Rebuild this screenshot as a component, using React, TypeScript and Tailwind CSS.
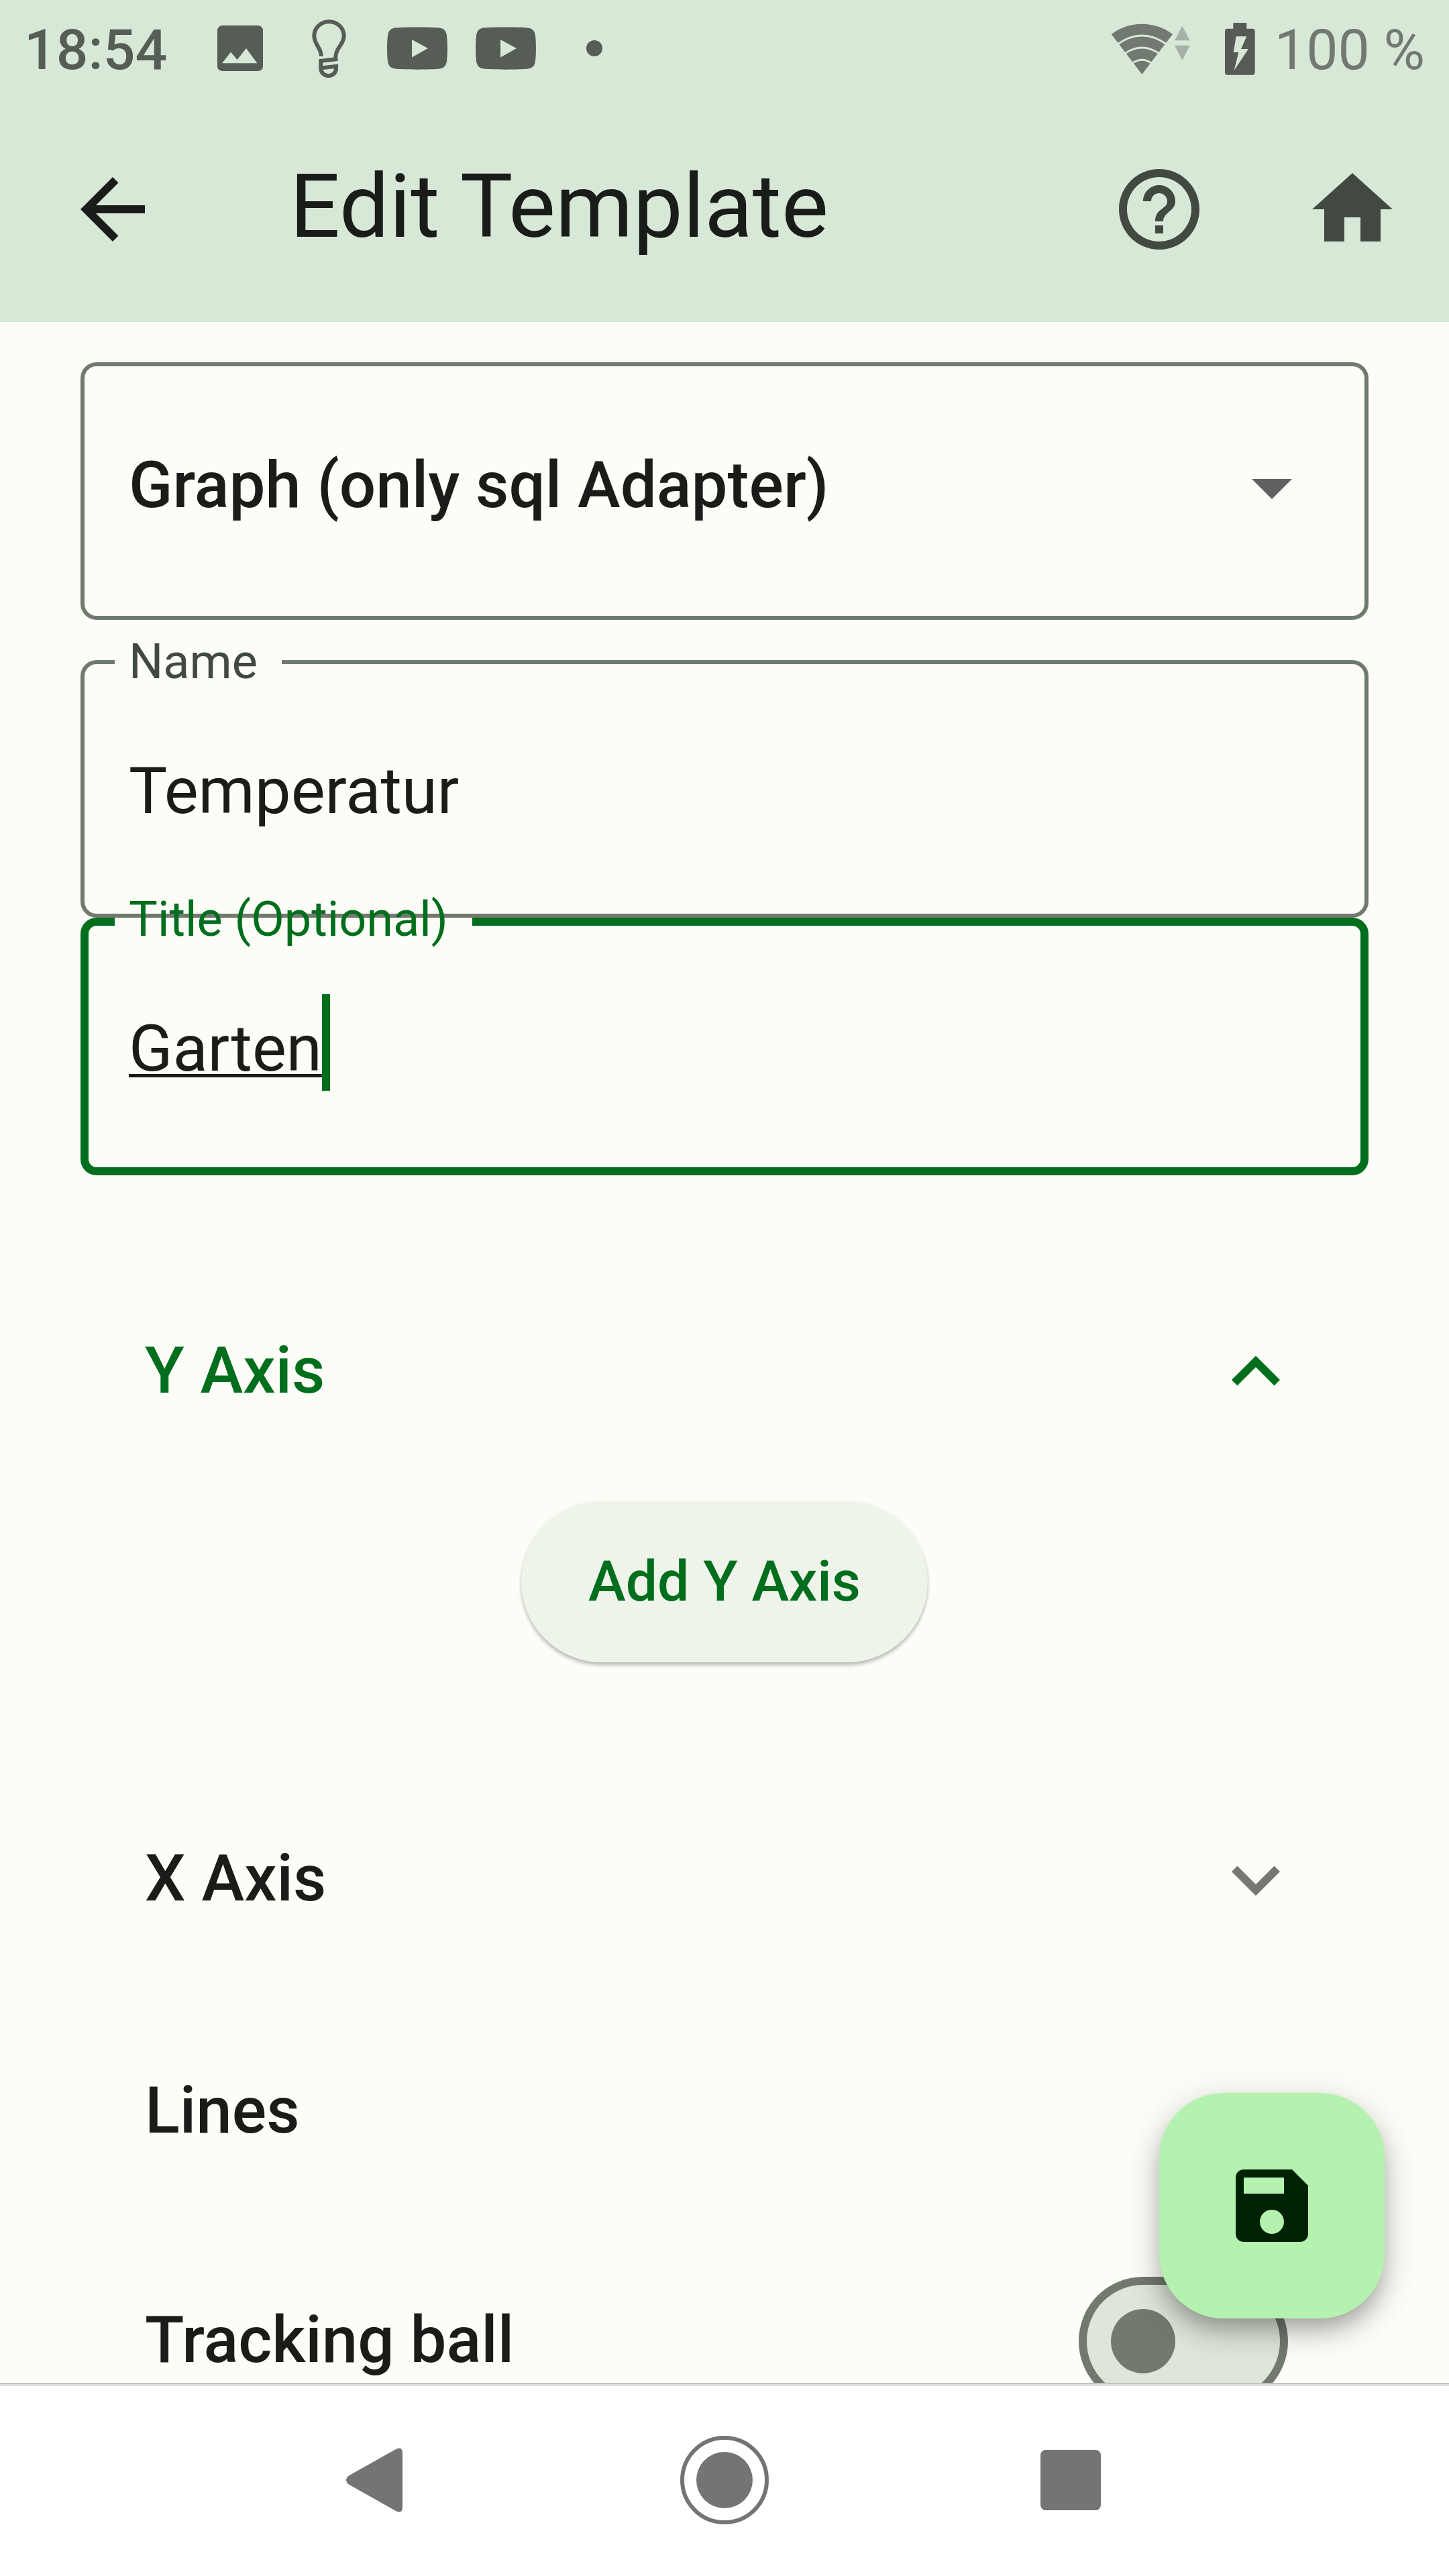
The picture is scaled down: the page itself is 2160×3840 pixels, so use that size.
import { useState, type ReactNode } from "react";

const cell = "flex w-[132px] shrink-0 items-center justify-center";

function PlayBadge() {
  return (
    <svg viewBox="0 0 90 64" className="h-[64px] w-[90px]" aria-hidden="true">
      <path
        fillRule="evenodd"
        fill="#565d55"
        d="M12 1.5C22 0 68 0 78 1.5C85 2.5 88 6 89 13C90.300 24 90.300 40 89 51C88 58 85 61.500 78 62.500C68 64 22 64 12 62.500C5 61.500 2 58 1 51C-.3 40 -.3 24 1 13C2 6 5 2.500 12 1.500ZM37 19V45.500L61 32Z"
      />
    </svg>
  );
}

function StatusBar() {
  return (
    <div className="flex h-36 items-center justify-between px-9 text-[84px] leading-[98px]">
      <div className="flex items-center text-[#565d55]">
        <time className="w-[256px] pt-[6px] font-medium">18:54</time>
        <span className={cell}>
          <svg viewBox="0 0 204 204" className="h-[68px] w-[68px]" aria-hidden="true">
            <path
              fillRule="evenodd"
              fill="#565d55"
              d="M22 0H182A22 22 0 0 1 204 22V182A22 22 0 0 1 182 204H22A22 22 0 0 1 0 182V22A22 22 0 0 1 22 0ZM21 169H178L129 102L89 153L60 119Z"
            />
          </svg>
        </span>
        <span className={cell}>
          <svg viewBox="490 50 160 270" className="h-[90px] w-[53px]" fill="none" stroke="#565d55" strokeWidth="18" aria-hidden="true">
            <path d="M535 221C535 183 503 168 503 129A67 64 0 0 1 637 129C637 168 600 183 600 221V234L533 242V274C533 320 602 320 602 274V266L540 273" />
          </svg>
        </span>
        <span className={cell}>
          <PlayBadge />
        </span>
        <span className={cell}>
          <PlayBadge />
        </span>
        <span className={cell}>
          <span className="size-6 rounded-full bg-[#565d55]" />
        </span>
      </div>
      <div className="flex items-center text-[#727971]">
        <svg viewBox="50 60 360 240" className="h-[80px] w-[120px]" aria-label="Wi-Fi">
          <path fill="#727971" d="M52 117C132 56 245 56 326 117L189 296Z" />
          <g fill="none" stroke="#d7e8d6" strokeWidth="9">
            <path d="M78 163Q189 83 300 163" />
            <path d="M110 205Q189 149 268 205" />
            <path d="M144 248Q189 216 234 248" />
          </g>
          <path fill="#a5b1a4" d="M369 80L403 145H335ZM369 233L335 167H403Z" />
        </svg>
        <svg viewBox="557 60 135 240" className="ml-[50px] h-[80px] w-[45px]" aria-label="Charging">
          <path
            fillRule="evenodd"
            fill="#565b55"
            d="M594 66H654V92H680A11 11 0 0 1 691 103V288A11 11 0 0 1 680 299H568A11 11 0 0 1 557 288V103A11 11 0 0 1 568 92H594ZM607 127L595 198H618L598 279L662 183H629L654 127Z"
          />
        </svg>
        <span className="ml-[29px] pt-[6px]">100 %</span>
      </div>
    </div>
  );
}

function Icon({ d, className = "" }: { d: string; className?: string }) {
  return (
    <svg viewBox="0 0 24 24" fill="currentColor" className={`size-36 ${className}`} aria-hidden="true">
      <path d={d} />
    </svg>
  );
}

const icons = {
  back: "M20 11H7.83l5.59-5.59L12 4l-8 8 8 8 1.41-1.41L7.83 13H20v-2z",
  help: "M11 18h2v-2h-2v2zm1-16C6.480 2 2 6.480 2 12s4.480 10 10 10 10-4.480 10-10S17.520 2 12 2zm0 18c-4.410 0-8-3.590-8-8s3.590-8 8-8 8 3.590 8 8-3.590 8-8 8zm0-14c-2.210 0-4 1.790-4 4h2c0-1.100.9-2 2-2s2 .9 2 2c0 2-3 1.750-3 5h2c0-2.250 3-2.500 3-5 0-2.210-1.790-4-4-4z",
  home: "M10 20v-6h4v6h5v-8h3L12 3 2 12h3v8z",
  dropDown: "M7 10l5 5 5-5z",
  more: "M16.590 8.590L12 13.170 7.410 8.590 6 10l6 6 6-6z",
  save: "M17 3H5c-1.110 0-2 .9-2 2v14c0 1.100.89 2 2 2h14c1.100 0 2-.9 2-2V7l-4-4zm-5 16c-1.660 0-3-1.340-3-3s1.340-3 3-3 3 1.340 3 3-1.340 3-3 3zm3-10H5V5h10v4z",
};

function IconButton({ label, d }: { label: string; d: string }) {
  return (
    <button type="button" aria-label={label} className="flex size-72 items-center justify-center text-[#424940]">
      <Icon d={d} />
    </button>
  );
}

function AppBar() {
  return (
    <div className="flex h-[336px] items-center">
      <button type="button" aria-label="Back" className="flex h-full w-[336px] items-center justify-center text-[#1a1c19]">
        <Icon d={icons.back} />
      </button>
      <h1 className="ml-24 flex-1 pb-2 text-[132px] leading-[156px] text-[#1a1c19]">Edit Template</h1>
      <IconButton label="Help" d={icons.help} />
      <IconButton label="Home" d={icons.home} />
    </div>
  );
}

function Tile({ title, open, onToggle, children }: { title: string; open: boolean; onToggle: () => void; children?: ReactNode }) {
  return (
    <section>
      <button
        type="button"
        aria-expanded={open}
        onClick={onToggle}
        className={`flex h-[336px] w-full items-center justify-between px-24 text-[96px] leading-[144px] font-medium ${open ? "text-[#006e1c]" : "text-[#1a1c19]"}`}
      >
        <span className="pb-1">{title}</span>
        <Icon d={icons.more} className={open ? "rotate-180" : "text-[#757871]"} />
      </button>
      {open && children}
    </section>
  );
}

export default function App() {
  const [name, setName] = useState("Temperatur");
  const [title, setTitle] = useState("Garten");
  const [yOpen, setYOpen] = useState(true);
  const [xOpen, setXOpen] = useState(false);
  const [tracking, setTracking] = useState(false);

  return (
    <div className="flex h-screen flex-col bg-[#fcfdf6] font-[Roboto,sans-serif] text-[#1a1c19]">
      <header className="shrink-0 bg-[#d7e8d6]">
        <StatusBar />
        <AppBar />
      </header>

      <div className="relative min-h-0 flex-1">
        <main className="h-full overflow-hidden px-[120px] pt-[60px]">
          <div className="grid items-center">
            <select
              aria-label="Template type"
              className="col-start-1 row-start-1 h-96 w-full appearance-none rounded-3xl border-6 border-[#72796f] bg-transparent px-[66px] pb-[18px] text-[96px] font-medium"
            >
              <option>Graph (only sql Adapter)</option>
            </select>
            <Icon d={icons.dropDown} className="pointer-events-none col-start-1 row-start-1 mr-[72px] mb-3 justify-self-end text-[#616161]" />
          </div>

          <fieldset className="mt-[60px] min-w-0 rounded-3xl border-6 border-[#72796f]">
            <legend className="ml-[45px] h-[6px] pr-9 pl-[21px] text-[72px] leading-[6px] text-[#424940]">
              <label htmlFor="name">Name</label>
            </legend>
            <input
              id="name"
              value={name}
              onChange={(e) => setName(e.target.value)}
              className="block h-[372px] w-full bg-transparent px-[66px] pt-[6px] text-[96px] outline-none"
            />
          </fieldset>

          <fieldset className="min-w-0 rounded-3xl border-12 border-[#006e1c]">
            <legend className="ml-[39px] h-[12px] pr-9 pl-[21px] text-[72px] leading-[6px] text-[#006e1c]">
              <label htmlFor="title">Title (Optional)</label>
            </legend>
            <div className="flex h-[360px] items-center px-[60px]">
              <input
                id="title"
                value={title}
                onChange={(e) => setTitle(e.target.value)}
                className="field-sizing-content h-36 max-w-full bg-transparent pt-[6px] text-[96px] underline decoration-[5px] underline-offset-[5px] outline-none"
              />
              <span className="mb-3 h-36 w-3 shrink-0 bg-[#006e1c]" />
            </div>
          </fieldset>

          <div className="mt-[125px]">
            <Tile title="Y Axis" open={yOpen} onToggle={() => setYOpen(!yOpen)}>
              <div className="flex justify-center pt-[25px] pb-[156px]">
                <button
                  type="button"
                  className="h-60 w-[606px] rounded-full bg-[#eff4eb] text-[84px] font-medium text-[#006e1c] shadow-[0_5px_5px_rgba(0,0,0,0.2),0_1px_4px_rgba(0,0,0,0.1)]"
                >
                  Add Y Axis
                </button>
              </div>
            </Tile>
            <Tile title="X Axis" open={xOpen} onToggle={() => setXOpen(!xOpen)} />
            <div className="mt-2 flex h-[336px] items-center px-24 text-[96px] leading-[144px] font-medium">Lines</div>
            <label className="mt-2 flex h-[336px] items-center justify-between pr-[120px] pl-24 text-[96px] leading-[144px] font-medium">
              <span className="pb-1">Tracking ball</span>
              <input
                type="checkbox"
                role="switch"
                checked={tracking}
                onChange={(e) => setTracking(e.target.checked)}
                className="flex h-48 w-[312px] appearance-none items-center rounded-full border-12 border-[#72796f] bg-[#dee5d9] px-9 before:size-24 before:rounded-full before:bg-[#72796f] checked:justify-end"
              />
            </label>
          </div>
        </main>

        <button
          type="button"
          aria-label="Save"
          className="absolute right-24 bottom-24 flex size-[336px] items-center justify-center rounded-[96px] bg-[#b6f2af] text-[#002204] shadow-[0_18px_30px_-6px_rgba(0,0,0,0.2),0_24px_48px_rgba(0,0,0,0.14),0_6px_60px_rgba(0,0,0,0.1)]"
        >
          <Icon d={icons.save} />
        </button>
      </div>

      <nav className="flex h-72 shrink-0 border-t border-[#9f9f9f] bg-white text-[#747474]">
        <div className="flex w-full justify-center border-t-4 border-[#e0e0e0] pb-1">
          <button type="button" aria-label="Back" className="flex w-[516px] items-center justify-center pr-3">
            <svg viewBox="0 0 84 96" className="h-24 w-21" fill="currentColor" aria-hidden="true">
              <path d="M3 42L74 2Q84 -3 84 8V88Q84 99 74 94L3 54Q-3 48 3 42Z" />
            </svg>
          </button>
          <button type="button" aria-label="Home" className="flex w-[516px] items-center justify-center">
            <span className="flex size-33 items-center justify-center rounded-full border-6 border-current">
              <span className="size-21 rounded-full bg-current" />
            </span>
          </button>
          <button type="button" aria-label="Recent apps" className="flex w-[516px] items-center justify-center">
            <span className="size-[90px] rounded-lg bg-current" />
          </button>
        </div>
      </nav>
    </div>
  );
}
